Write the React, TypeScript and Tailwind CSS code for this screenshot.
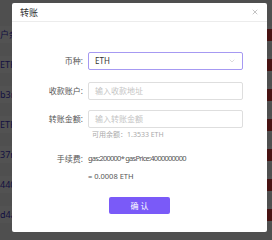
import { ChevronDown, X } from "lucide-react";

const rows = ["户余", "ETH", "b3n", "ETH", "37n", "440", "d4a"];

const App = () => {
  return (
    <div
      className="relative w-[272px] h-[240px] overflow-hidden bg-[#f4f4f6]"
      style={{ fontFamily: '"Noto Sans", "Noto Sans CJK SC", sans-serif' }}
    >
      {/* page behind the modal */}
      <div className="flex flex-col pt-[26px] gap-[13px]">
        {rows.map((r, i) => (
          <div key={i} className="flex items-center justify-between h-[17px] bg-white">
            <span className="text-[9px] text-[#3d35c8] leading-none">{r}</span>
            <span className="w-[8px] h-[12px] bg-[#e03b3b]" />
          </div>
        ))}
      </div>
      <div className="absolute inset-0 bg-black/[0.68]" />

      {/* modal */}
      <div className="absolute left-[12px] top-[3px] w-[255px] h-[229px] bg-white rounded-[2px] flex flex-col">
        <div className="h-[19px] flex items-center justify-between px-[8px] border-b border-[#ececec]">
          <span className="text-[9px] text-[#333] leading-none">转账</span>
          <X className="w-[8px] h-[8px] text-[#888]" strokeWidth={1.5} />
        </div>

        <div className="flex flex-col pt-[30px] text-[8px] leading-none">
          <div className="flex items-center h-[18px]">
            <span className="w-[71px] text-right text-[#555]">币种:</span>
            <div className="ml-[5px] w-[155px] h-[18px] border border-[#a699f2] rounded-[2px] flex items-center justify-between px-[6px]">
              <span className="text-[#333]">ETH</span>
              <ChevronDown className="w-[8px] h-[8px] text-[#bbb]" strokeWidth={1.5} />
            </div>
          </div>

          <div className="flex items-center h-[18px] mt-[12px]">
            <span className="w-[71px] text-right text-[#555]">收款账户:</span>
            <div className="ml-[5px] w-[155px] h-[18px] border border-[#dedede] rounded-[2px] flex items-center px-[6px]">
              <span className="text-[#c4c4c4]">输入收款地址</span>
            </div>
          </div>

          <div className="flex items-center h-[18px] mt-[10px]">
            <span className="w-[71px] text-right text-[#555]">转账金额:</span>
            <div className="ml-[5px] w-[155px] h-[18px] border border-[#dedede] rounded-[2px] flex items-center px-[6px]">
              <span className="text-[#c4c4c4]">输入转账金额</span>
            </div>
          </div>
          <div className="pl-[80px] mt-[3px] h-[8px] text-[7px] text-[#aaa]">可用余额：1.3533 ETH</div>

          <div className="flex items-center h-[10px] mt-[15px]">
            <span className="w-[71px] text-right text-[#555]">手续费:</span>
            <span className="ml-[5px] text-[7.5px] tracking-[-0.75px] text-[#555]">gas:200000* gasPrice:4000000000</span>
          </div>
          <div className="pl-[76px] mt-[9px] h-[8px] text-[7.5px] text-[#555]">= 0.0008 ETH</div>

          <div className="flex justify-center mt-[16px]">
            <button className="w-[61px] h-[17px] rounded-[2px] bg-[#7a5af8] text-white text-[8px] leading-none">
              确 认
            </button>
          </div>
        </div>
      </div>
    </div>
  );
};

export default App;
